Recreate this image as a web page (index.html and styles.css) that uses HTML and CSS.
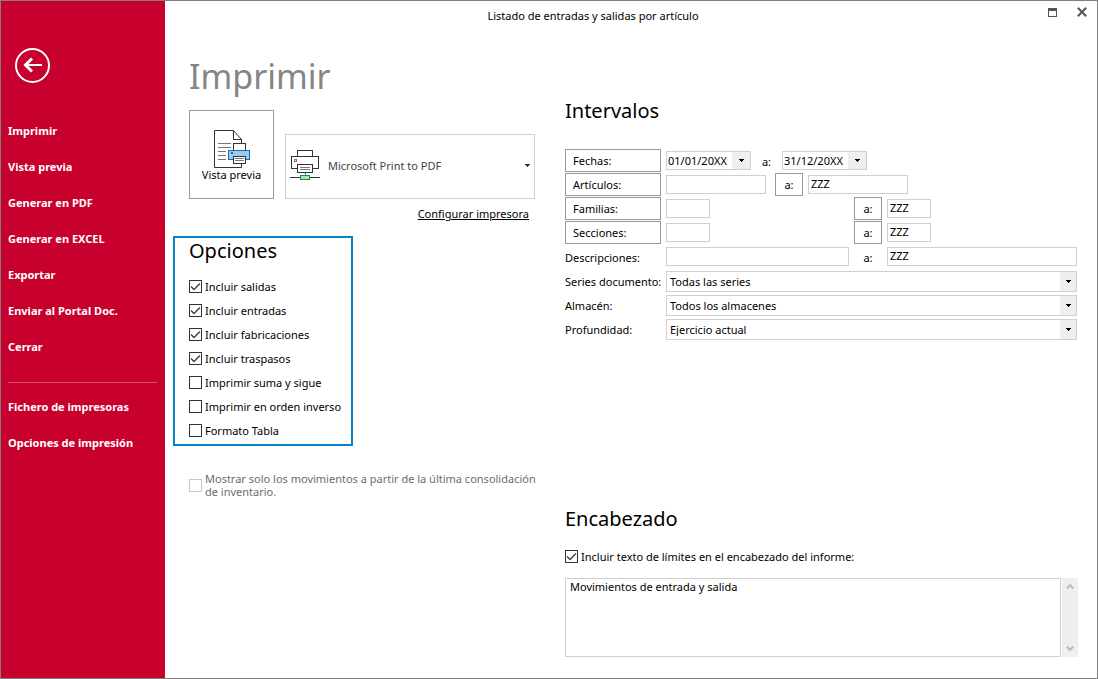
FILE: index.html
```html
<!DOCTYPE html>
<html lang="es">
<head>
<meta charset="utf-8">
<title>Listado de entradas y salidas por artículo</title>
<link rel="stylesheet" href="styles.css">
</head>
<body>
<div class="window">
  <aside class="sidebar">
    <button class="back" type="button" aria-label="Volver">
      <svg width="36" height="36" viewBox="0 0 36 36" fill="none" stroke="#fff" stroke-width="2"><circle cx="17.5" cy="18.5" r="16.5"/><path d="M10 18H27" stroke-width="2"/><path d="M17 11.500L10.500 18L17 24.500" stroke-width="3"/></svg>
    </button>
    <nav class="menu">
      <a href="#">Imprimir</a>
      <a href="#">Vista previa</a>
      <a href="#">Generar en PDF</a>
      <a href="#">Generar en EXCEL</a>
      <a href="#">Exportar</a>
      <a href="#">Enviar al Portal Doc.</a>
      <a href="#">Cerrar</a>
      <hr class="divider">
      <a href="#">Fichero de impresoras</a>
      <a href="#">Opciones de impresión</a>
    </nav>
  </aside>

  <main class="main">
    <header class="titlebar">
      <span class="caption">Listado de entradas y salidas por artículo</span>
      <div class="controls">
        <button type="button" aria-label="Maximizar"><svg width="9" height="9" viewBox="0 0 9 9" shape-rendering="crispEdges"><path d="M.5 .5h8v8h-8z" fill="none" stroke="#555"/><path d="M0 0h9v3H0z" fill="#555"/></svg></button>
        <button type="button" aria-label="Cerrar ventana"><svg width="10" height="10" viewBox="0 0 10 10"><path d="M.8 .8L9.2 9.2M9.2 .8L.8 9.2" stroke="#555" stroke-width="2"/></svg></button>
      </div>
    </header>

    <div class="columns">
      <section class="left">
        <h1>Imprimir</h1>
        <div class="printer-row">
          <button class="preview" type="button">
            <svg width="38" height="40" viewBox="0 0 38 40" fill="none" shape-rendering="crispEdges">
              <path d="M1.500 2.500H20.500L28.500 11.500V39.500H1.500Z" fill="#fff" stroke="#333" shape-rendering="auto"/>
              <path d="M20.500 2.500V11.500H28.500" stroke="#333"/>
              <path d="M5 15.500H18M5 19.500H18M5 23.500H13M5 27.500H13M5 31.500H13" stroke="#777"/>
              <path d="M20.500 15.500H32.500V22.500H20.500Z" fill="#fff" stroke="#333"/>
              <path d="M15.500 22.500H36.500V31.500H15.500Z" fill="#9ccbef" stroke="#0f6cbd"/>
              <path d="M18 24H20V26H18Z" fill="#0f6cbd"/>
              <path d="M20.500 28.500H32.500V35.500H20.500Z" fill="#fff" stroke="#333"/>
              <path d="M22 30.500H31M22 32.500H31" stroke="#777"/>
            </svg>
            <span>Vista previa</span>
          </button>
          <div class="printer">
            <svg width="30" height="31" viewBox="0 0 30 31" fill="none" shape-rendering="crispEdges">
              <path d="M7.500 6V.5H22.500V6M1.500 6.500H28.500V18.500H1.500Z" stroke="#333"/>
              <path d="M4.500 9.500H6.500V11.500H4.500Z" stroke="#777"/>
              <path d="M7.500 14.500H22.500V22.500H7.500Z" fill="#fff" stroke="#333"/>
              <path d="M10 17.500H20M10 19.500H20M15.500 23V25" stroke="#777"/>
              <path d="M0 27.500H30" stroke="#333"/>
              <path d="M10.500 25.500H19.500V29.500H10.500Z" fill="#b5dfc0" stroke="#129a3a"/>
            </svg>
            <span class="select">
              <select aria-label="Impresora"><option>Microsoft Print to PDF</option></select>
              <svg class="arrow" width="5" height="3" viewBox="0 0 5 3" shape-rendering="crispEdges"><path d="M0 0H5V1H4V2H3V3H2V2H1V1H0Z" fill="#333"/></svg>
            </span>
          </div>
        </div>
        <a class="configure" href="#">Configurar impresora</a>

        <div class="options">
          <h2>Opciones</h2>
          <label class="check"><input type="checkbox" checked>Incluir salidas</label>
          <label class="check"><input type="checkbox" checked>Incluir entradas</label>
          <label class="check"><input type="checkbox" checked>Incluir fabricaciones</label>
          <label class="check"><input type="checkbox" checked>Incluir traspasos</label>
          <label class="check"><input type="checkbox">Imprimir suma y sigue</label>
          <label class="check"><input type="checkbox">Imprimir en orden inverso</label>
          <label class="check"><input type="checkbox">Formato Tabla</label>
        </div>
        <label class="check muted"><input type="checkbox" disabled>Mostrar solo los movimientos a partir de la última consolidación de inventario.</label>
      </section>

      <section class="right">
        <h2>Intervalos</h2>
        <div class="fields">
          <div class="line">
            <button class="range name" type="button">Fechas:</button>
            <span class="date"><input type="text" aria-label="Fecha desde" value="01/01/20XX"><button type="button" aria-label="Abrir calendario"><svg width="5" height="3" viewBox="0 0 5 3" shape-rendering="crispEdges"><path d="M0 0H5V1H4V2H3V3H2V2H1V1H0Z"/></svg></button></span>
            <label class="to" for="date-to">a:</label>
            <span class="date"><input id="date-to" type="text" value="31/12/20XX"><button type="button" aria-label="Abrir calendario"><svg width="5" height="3" viewBox="0 0 5 3" shape-rendering="crispEdges"><path d="M0 0H5V1H4V2H3V3H2V2H1V1H0Z"/></svg></button></span>
          </div>
          <div class="line">
            <button class="range name" type="button">Artículos:</button>
            <input class="box medium" type="text" aria-label="Artículos desde">
            <button class="range" type="button">a:</button>
            <input class="box medium" type="text" aria-label="Artículos hasta" value="ZZZ">
          </div>
          <div class="grid">
            <button class="range name" type="button">Familias:</button>
            <input class="box short" type="text" aria-label="Familias desde">
            <button class="range" type="button">a:</button>
            <input class="box short" type="text" aria-label="Familias hasta" value="ZZZ">

            <button class="range name" type="button">Secciones:</button>
            <input class="box short" type="text" aria-label="Secciones desde">
            <button class="range" type="button">a:</button>
            <input class="box short" type="text" aria-label="Secciones hasta" value="ZZZ">

            <label for="desc-from">Descripciones:</label>
            <input class="box" id="desc-from" type="text">
            <label class="center" for="desc-to">a:</label>
            <input class="box" id="desc-to" type="text" value="ZZZ">

            <label for="series">Series documento:</label>
            <span class="select boxed"><select id="series"><option>Todas las series</option></select><span class="arrow drop"><svg width="5" height="3" viewBox="0 0 5 3" shape-rendering="crispEdges"><path d="M0 0H5V1H4V2H3V3H2V2H1V1H0Z"/></svg></span></span>

            <label for="store">Almacén:</label>
            <span class="select boxed"><select id="store"><option>Todos los almacenes</option></select><span class="arrow drop"><svg width="5" height="3" viewBox="0 0 5 3" shape-rendering="crispEdges"><path d="M0 0H5V1H4V2H3V3H2V2H1V1H0Z"/></svg></span></span>

            <label for="depth">Profundidad:</label>
            <span class="select boxed"><select id="depth"><option>Ejercicio actual</option></select><span class="arrow drop"><svg width="5" height="3" viewBox="0 0 5 3" shape-rendering="crispEdges"><path d="M0 0H5V1H4V2H3V3H2V2H1V1H0Z"/></svg></span></span>
          </div>
        </div>

        <div class="heading-block">
          <h2>Encabezado</h2>
          <label class="check"><input type="checkbox" checked>Incluir texto de límites en el encabezado del informe:</label>
          <div class="memo">
            <textarea aria-label="Texto del encabezado">Movimientos de entrada y salida</textarea>
            <div class="scroll">
              <svg width="8" height="7" viewBox="0 0 8 7" fill="none" stroke="#bbb" stroke-width="2"><path d="M.8 5.500L4 2L7.200 5.500"/></svg>
              <svg width="8" height="7" viewBox="0 0 8 7" fill="none" stroke="#bbb" stroke-width="2"><path d="M.8 1.500L4 5L7.200 1.500"/></svg>
            </div>
          </div>
        </div>
      </section>
    </div>
  </main>
</div>
</body>
</html>
```
FILE: styles.css
```css
* { box-sizing: border-box; }

body {
  margin: 0;
  font: 11px/13px "Noto Sans", "Open Sans", sans-serif;
  color: #000;
  background: #fff;
}

button, input, select, textarea {
  margin: 0;
  padding: 0;
  border: 0;
  border-radius: 0;
  background: none;
  font: inherit;
  color: inherit;
}

.window {
  display: flex;
  min-height: 100vh;
  border: 1px solid #808080;
}

/* Sidebar */
.sidebar {
  flex: none;
  width: 164px;
  padding: 46px 8px 0 7px;
  background: #c8002d;
}

.back { display: block; margin: 0 0 30px 7px; }
.back svg { display: block; }

.menu { display: flex; flex-direction: column; }

.menu a {
  color: #fff;
  font-weight: 700;
  line-height: 36px;
  text-decoration: none;
}

.divider {
  width: 100%;
  margin: 17px 0 6px;
  border: 0;
  border-top: 1px solid #d64d6b;
}

/* Title bar */
.main {
  flex: 1;
  min-width: 0;
  display: flex;
  flex-direction: column;
}

.titlebar { display: flex; align-items: center; height: 28px; }
.caption { flex: 1; text-align: center; }

.controls {
  display: flex;
  justify-content: flex-end;
  align-items: center;
  gap: 20px;
  width: 76px;
  height: 22px;
  padding-right: 10px;
  align-self: flex-start;
}

.controls svg { display: block; }

.columns {
  flex: 1;
  display: grid;
  grid-template-columns: 346px minmax(0, 1fr);
  column-gap: 30px;
  padding: 2px 20px 21px 24px;
}

h1, h2 { margin: 0; font-weight: 400; }
h2 { font-size: 20px; line-height: 28px; }

/* Print panel */
.left { display: flex; flex-direction: column; }

h1 {
  padding-top: 20px;
  color: #858585;
  font-size: 34px;
  line-height: 50px;
}

.printer-row {
  display: flex;
  align-items: flex-end;
  gap: 11px;
  margin-top: 9px;
}

.preview {
  display: flex;
  flex-direction: column;
  align-items: center;
  justify-content: center;
  width: 85px;
  height: 89px;
  border: 1px solid #999;
}

.printer {
  flex: 1;
  display: flex;
  align-items: center;
  gap: 8px;
  height: 65px;
  padding: 0 4px 2px;
  border: 1px solid #d0d0d0;
  color: #444;
}

.select { display: grid; flex: 1; }

.select > * { grid-area: 1 / 1; }
.select select { appearance: none; width: 100%; outline: 0; }

.arrow {
  justify-self: end;
  align-self: center;
  pointer-events: none;
}

.configure {
  align-self: flex-end;
  margin: 7px 6px 0 0;
  color: #000;
  line-height: 16px;
  text-decoration: underline;
}

.options {
  align-self: flex-start;
  width: 180px;
  margin: 14px 0 0 -16px;
  padding: 0 0 2px 14px;
  border: 2px solid #0a84c8;
}

.options h2 { margin-bottom: 10px; line-height: 26px; }

.check {
  display: flex;
  align-items: center;
  gap: 3px;
  min-height: 24px;
}

.check input {
  appearance: none;
  flex: none;
  width: 13px;
  height: 13px;
  border: 1px solid #333;
  background: #fff center no-repeat;
}

.check input:checked {
  background-image: url("data:image/svg+xml,%3Csvg xmlns='http://www.w3.org/2000/svg' width='11' height='11' fill='none' stroke='%23444' stroke-width='1.500'%3E%3Cpath d='M1 5.500L4 8.500L10 2.500'/%3E%3C/svg%3E");
}

/* The note may run slightly into the gutter before it wraps */
.muted { margin: 26px -16px 0 0; color: #6d6d6d; }
.muted input { border-color: #c8c8c8; }

/* Ranges */
.right { display: flex; flex-direction: column; padding-top: 66px; }

.fields { margin-top: 24px; }

.line { display: flex; align-items: center; height: 24px; }

.range {
  width: 28px;
  height: 23px;
  margin-bottom: 1px;
  border: 1px solid #999;
}

.range.name { width: 96px; padding-left: 7px; text-align: left; }
.line .name { margin-right: 5px; }

.to { width: 31px; text-align: center; }

.date {
  display: flex;
  width: 85px;
  height: 19px;
  margin-bottom: 1px;
  border: 1px solid #d0d0d0;
}

.date input { flex: 1; min-width: 0; padding: 0 0 1px 1px; }
.date button { display: grid; place-items: center; width: 18px; background: #efefef; }

.box {
  width: 100%;
  height: 19px;
  margin-bottom: 1px;
  padding: 0 2px 2px;
  border: 1px solid #d0d0d0;
}

.medium { width: 100px; }
.short { width: 44px; }
.line .medium + .range { margin: 0 5px 1px 9px; }

.grid {
  display: grid;
  grid-template-columns: 96px minmax(0, 183fr) 28px minmax(0, 190fr);
  grid-auto-rows: 24px;
  column-gap: 5px;
  align-items: center;
}

.grid label { white-space: nowrap; }
.center { text-align: center; }

.boxed {
  grid-column: 2 / -1;
  height: 21px;
  border: 1px solid #d0d0d0;
}

.boxed select { padding-left: 3px; }

.drop {
  display: grid;
  place-items: center;
  width: 16px;
  height: 100%;
  background: #efefef;
}

/* Report heading */
.heading-block { margin-top: auto; }
.heading-block .check { margin: 11px 0 10px; }

.memo { display: flex; gap: 1px; margin-right: -1px; }

.memo textarea {
  flex: 1;
  height: 79px;
  padding: 1px 4px;
  border: 1px solid #d0d0d0;
  resize: none;
}

.scroll {
  display: flex;
  flex-direction: column;
  justify-content: space-between;
  align-items: center;
  width: 16px;
  padding: 5px 0;
  background: #efefef;
}
```
